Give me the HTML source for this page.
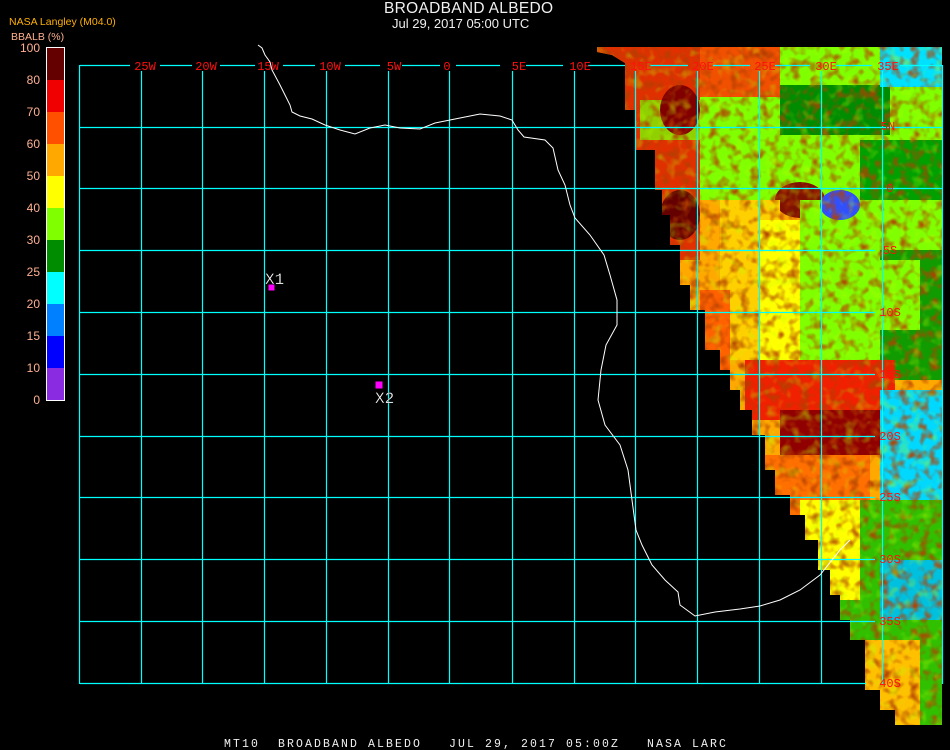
<!DOCTYPE html>
<html><head><meta charset="utf-8"><style>
html,body{margin:0;padding:0;background:#000;}
body{width:950px;height:750px;position:relative;overflow:hidden;font-family:"Liberation Sans",sans-serif;}
.t{position:absolute;white-space:nowrap;}
</style></head><body>
<div class="t" style="left:384px;top:0px;font-size:15.5px;color:#f0f0f0;letter-spacing:0.3px">BROADBAND ALBEDO</div>
<div class="t" style="left:392px;top:16px;font-size:13px;color:#f0f0f0">Jul 29, 2017 05:00 UTC</div>
<div class="t" style="left:9px;top:16px;font-size:10.5px;color:#ffb000">NASA Langley (M04.0)</div>
<div class="t" style="left:11px;top:31px;font-size:10.5px;color:#ffb090">BBALB (%)</div>
<svg width="950" height="750" style="position:absolute;left:0;top:0">
<g font-family="Liberation Sans, sans-serif" font-size="12" fill="#ffb090" text-anchor="end">
<text x="40" y="52">100</text><text x="40" y="84">80</text><text x="40" y="116">70</text><text x="40" y="148">60</text><text x="40" y="180">50</text><text x="40" y="212">40</text><text x="40" y="244">30</text><text x="40" y="276">25</text><text x="40" y="308">20</text><text x="40" y="340">15</text><text x="40" y="372">10</text><text x="40" y="404">0</text>
</g>
<g>
<rect x="47" y="48" width="18" height="32" fill="#640000"/>
<rect x="47" y="80" width="18" height="32" fill="#f00000"/>
<rect x="47" y="112" width="18" height="32" fill="#ff5000"/>
<rect x="47" y="144" width="18" height="32" fill="#ffa800"/>
<rect x="47" y="176" width="18" height="32" fill="#ffff00"/>
<rect x="47" y="208" width="18" height="32" fill="#80ff00"/>
<rect x="47" y="240" width="18" height="32" fill="#008c00"/>
<rect x="47" y="272" width="18" height="32" fill="#00ffff"/>
<rect x="47" y="304" width="18" height="32" fill="#0080ff"/>
<rect x="47" y="336" width="18" height="32" fill="#0000ff"/>
<rect x="47" y="368" width="18" height="32" fill="#8a2be2"/>
<rect x="46.5" y="47.5" width="18" height="353" fill="none" stroke="#fff" stroke-width="1"/>
</g>
<defs>
<clipPath id="dc"><polygon points="597,47 942,47 942,725 895,725 895,710 880,710 880,690 865,690 865,640 850,640 850,620 840,620 840,595 830,595 830,570 818,570 818,540 805,540 805,515 790,515 790,495 775,495 775,470 765,470 765,435 752,435 752,410 740,410 740,390 730,390 730,370 720,370 720,350 705,350 705,310 690,310 690,285 680,285 680,245 670,245 670,215 662,215 662,190 655,190 655,150 635,150 635,110 625,110 625,63 612,55 597,52"/></clipPath>
<filter id="n"><feTurbulence type="fractalNoise" baseFrequency="0.1" numOctaves="2" seed="3"/><feColorMatrix values="0 0 0 0 0.45  0 0 0 0 0.05  0 0 0 0 0  0 0 0 2.4 -1.1"/></filter>
<filter id="g"><feTurbulence type="fractalNoise" baseFrequency="0.09" numOctaves="2" seed="8"/><feColorMatrix values="0 0 0 0 0.5  0 0 0 0 1  0 0 0 0 0  0 0 0 2.4 -1.25"/></filter>
</defs>
<g clip-path="url(#dc)">
<rect x="590" y="40" width="360" height="700" fill="#ffa800"/>
<rect x="590" y="40" width="110" height="220" fill="#e03000"/>
<rect x="640" y="100" width="60" height="40" fill="#90d000"/>
<rect x="700" y="40" width="250" height="160" fill="#80ff00"/>
<rect x="700" y="47" width="80" height="50" fill="#f05000"/>
<rect x="780" y="85" width="110" height="50" fill="#008c00"/>
<rect x="880" y="47" width="62" height="40" fill="#00e0ff"/>
<rect x="860" y="140" width="82" height="60" fill="#00a000"/>
<ellipse cx="680" cy="215" rx="20" ry="25" fill="#640000"/>
<ellipse cx="680" cy="110" rx="20" ry="25" fill="#800000"/>
<ellipse cx="800" cy="200" rx="25" ry="18" fill="#801000"/>
<rect x="720" y="200" width="60" height="160" fill="#ffd000"/>
<rect x="700" y="290" width="30" height="80" fill="#ff6000"/>
<rect x="760" y="220" width="60" height="150" fill="#ffff00"/>
<rect x="800" y="200" width="142" height="160" fill="#80ff00"/>
<rect x="880" y="250" width="62" height="130" fill="#109c00"/>
<rect x="880" y="260" width="40" height="70" fill="#80ff00"/>
<ellipse cx="840" cy="205" rx="20" ry="15" fill="#3050ff"/>
<rect x="745" y="360" width="150" height="60" fill="#f02000"/>
<rect x="780" y="410" width="100" height="45" fill="#900000"/>
<rect x="760" y="455" width="110" height="80" fill="#ff7000"/>
<rect x="880" y="390" width="62" height="130" fill="#00d8ff"/>
<rect x="820" y="500" width="122" height="230" fill="#30c000"/>
<rect x="800" y="500" width="60" height="100" fill="#ffff00"/>
<rect x="880" y="560" width="62" height="60" fill="#00c0e0"/>
<rect x="860" y="640" width="60" height="90" fill="#ffc000"/>
<rect x="590" y="40" width="360" height="700" filter="url(#n)"/>
<rect x="590" y="40" width="360" height="700" filter="url(#g)" opacity="0.5"/>
</g>
<g stroke="#00ffff" stroke-width="1.2">
<line x1="80" y1="65.5" x2="130" y2="65.5"/><line x1="160" y1="65.5" x2="192" y2="65.5"/><line x1="220" y1="65.5" x2="255" y2="65.5"/><line x1="283" y1="65.5" x2="315" y2="65.5"/><line x1="345" y1="65.5" x2="380" y2="65.5"/><line x1="402" y1="65.5" x2="440" y2="65.5"/><line x1="456" y1="65.5" x2="500" y2="65.5"/><line x1="526" y1="65.5" x2="563" y2="65.5"/><line x1="588" y1="65.5" x2="625" y2="65.5"/><line x1="650" y1="65.5" x2="688" y2="65.5"/><line x1="713" y1="65.5" x2="750" y2="65.5"/><line x1="775" y1="65.5" x2="810" y2="65.5"/><line x1="836" y1="65.5" x2="872" y2="65.5"/><line x1="900" y1="65.5" x2="942" y2="65.5"/>
<line x1="80" y1="127.5" x2="942" y2="127.5"/><line x1="80" y1="188.5" x2="942" y2="188.5"/><line x1="80" y1="250.5" x2="875" y2="250.5"/><line x1="80" y1="312.5" x2="875" y2="312.5"/><line x1="80" y1="374.5" x2="875" y2="374.5"/><line x1="80" y1="436.5" x2="875" y2="436.5"/><line x1="80" y1="497.5" x2="875" y2="497.5"/><line x1="80" y1="559.5" x2="875" y2="559.5"/><line x1="80" y1="621.5" x2="875" y2="621.5"/><line x1="80" y1="683.5" x2="866" y2="683.5"/>
<line x1="79.5" y1="65" x2="79.5" y2="684"/><line x1="141.5" y1="71" x2="141.5" y2="684"/><line x1="202.5" y1="71" x2="202.5" y2="684"/><line x1="264.5" y1="71" x2="264.5" y2="684"/><line x1="326.5" y1="71" x2="326.5" y2="684"/><line x1="388.5" y1="71" x2="388.5" y2="684"/><line x1="449.5" y1="71" x2="449.5" y2="684"/><line x1="512.5" y1="71" x2="512.5" y2="684"/><line x1="574.5" y1="71" x2="574.5" y2="684"/><line x1="635.5" y1="71" x2="635.5" y2="684"/><line x1="697.5" y1="71" x2="697.5" y2="684"/><line x1="759.5" y1="71" x2="759.5" y2="684"/><line x1="821.5" y1="71" x2="821.5" y2="684"/><line x1="882.5" y1="71" x2="882.5" y2="684"/><line x1="942.5" y1="65" x2="942.5" y2="684"/>
</g>
<g font-family="Liberation Mono, monospace" font-size="12" fill="#ff1010" text-anchor="middle">
<text x="145" y="70">25W</text><text x="206" y="70">20W</text><text x="268" y="70">15W</text><text x="330" y="70">10W</text><text x="394" y="70">5W</text><text x="447" y="70">0</text><text x="519" y="70">5E</text><text x="580" y="70">10E</text><text x="641" y="70">15E</text><text x="703" y="70">20E</text><text x="765" y="70">25E</text><text x="826" y="70">30E</text><text x="888" y="70">35E</text>
<text x="888" y="130">5N</text><text x="890" y="192">0</text><text x="890" y="254">5S</text><text x="890" y="316">10S</text><text x="890" y="378">15S</text><text x="890" y="440">20S</text><text x="890" y="501">25S</text><text x="890" y="563">30S</text><text x="890" y="625">35S</text><text x="890" y="687">40S</text>
</g>
<polyline fill="none" stroke="#fff" stroke-width="1" points="258,45 262,48 265,55 270,62 272,70 280,85 285,95 290,105 292,112 300,116 312,119 325,125 340,130 355,134 370,128 385,125 400,128 420,129 435,123 450,120 465,117 480,114 500,116 512,120 518,130 524,137 545,140 553,148 558,170 565,185 570,205 575,218 590,235 604,255 610,275 617,300 617,325 606,345 601,370 598,400 605,425 620,445 628,470 632,500 636,530 642,545 652,565 665,580 678,592 680,605 695,616 715,612 740,609 760,606 780,600 800,590 820,575 840,550 850,540"/>
<rect x="268.5" y="284.5" width="6" height="6" fill="#ff00ff"/>
<rect x="375.5" y="381.5" width="7" height="7" fill="#ff00ff"/>
<g font-family="Liberation Mono, monospace" font-size="16" fill="#fff" stroke="#000" stroke-width="0.3">
<text x="265" y="284">X1</text><text x="375" y="403">X2</text>
</g>
<text x="224" y="747" font-family="Liberation Mono, monospace" font-size="11.5" fill="#f0f0f0" letter-spacing="2.1" xml:space="preserve">MT10  BROADBAND ALBEDO   JUL 29, 2017 05:00Z   NASA LARC</text>
</svg>
</body></html>
